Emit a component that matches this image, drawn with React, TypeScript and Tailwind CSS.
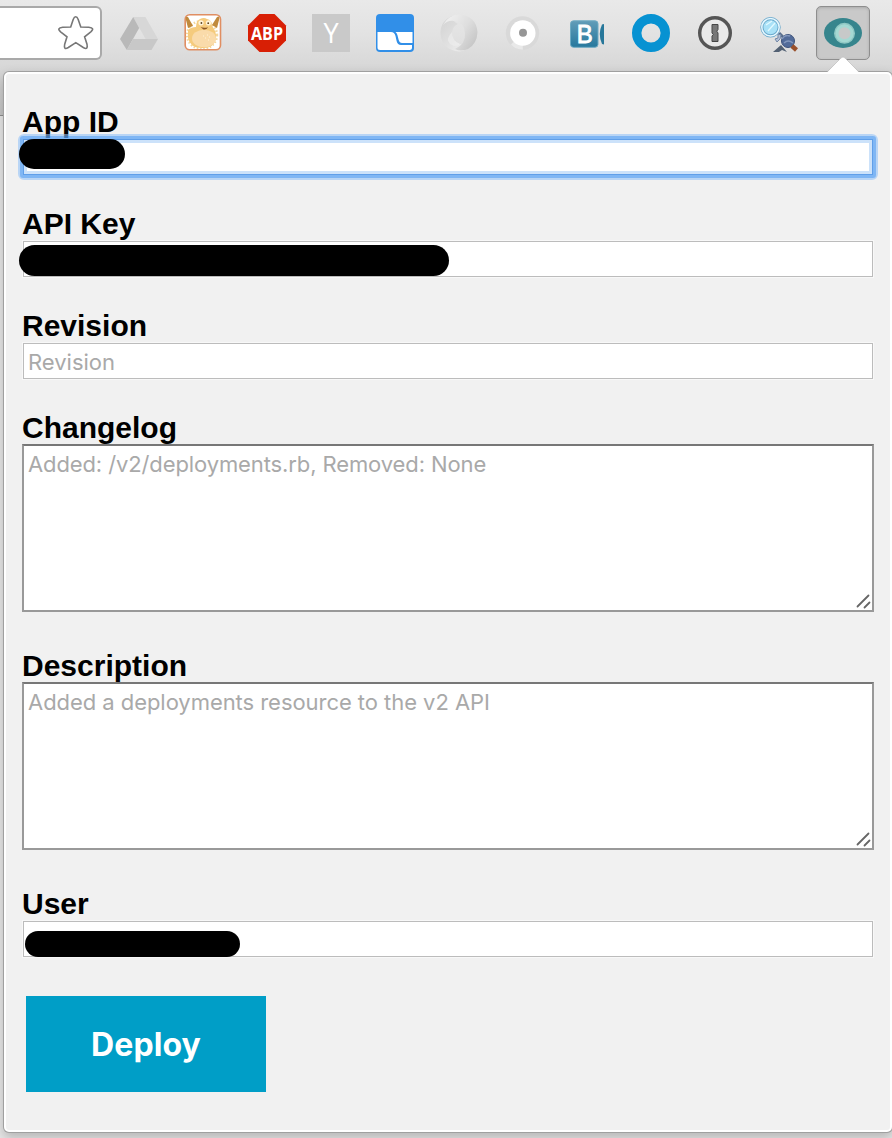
import type { ReactNode } from "react";

function Icon({ children }: { children: ReactNode }) {
  return (
    <svg viewBox="0 0 38 38" className="h-[38px] w-[38px] shrink-0 overflow-visible">
      {children}
    </svg>
  );
}

function Toolbar() {
  return (
    <div className="flex h-[116px] items-start border-b border-[#8f8f8f] bg-[linear-gradient(#e9e9e9_0px,#e2e2e2_35px,#d6d6d6_72px,#c6c6c6_115px)] pt-[6px]">
      <div className="flex h-[54px] w-[102px] shrink-0 items-center justify-end rounded-r-[6px] border-2 border-l-0 border-[#a9a9a9] bg-white pr-[5px]">
        <svg viewBox="0 0 38 38" className="h-[38px] w-[38px]">
          <path
            d="M18.7 2.8Q20.2 2.8 21.2 5.5L23.8 13L31.8 13.3Q38.3 14 33.8 17.8L27.6 22.8L30 30.2Q31.3 36.5 26.3 33.5L18.8 28.6L11.3 33.5Q6.3 36.5 7.7 30.2L10 22.8L3.6 17.8Q-.8 14 5.7 13.3L13.7 13L16.2 5.5Q17.2 2.8 18.7 2.8Z"
            fill="none"
            stroke="#777"
            strokeWidth="1.6"
          />
        </svg>
      </div>
      <div className="ml-[18px] flex gap-[26px] pt-2">
        <Icon>
          <path d="M13.2 3H25.4L38 25H25.6Z" fill="#d7d7d7" />
          <path d="M13.2 3L19.2 14L6.8 36L0 25Z" fill="#b9b9b9" />
          <path d="M13 25H38L31.5 36H6.8Z" fill="#c8c8c8" />
        </Icon>
        <Icon>
          <defs>
            <clipPath id="fishClip"><rect x="1.5" y="1.5" width="34.5" height="33.5" rx="4" /></clipPath>
          </defs>
          <rect x="1.2" y=".8" width="35.3" height="35" rx="4.5" fill="#fff" stroke="#e08e62" strokeWidth="1.6" />
          <g clipPath="url(#fishClip)">
            <ellipse cx="18" cy="21" rx="15" ry="14" fill="none" stroke="#f3d79e" strokeWidth="2.5" strokeDasharray="1.5 1.8" />
            <path d="M1 2L4 3L9 12L4 14ZM36 2L33 3L28 11L33 14Z" fill="#c08a3c" />
            <path d="M4 16Q7 13 12 13Q12 7 16 5Q20 3 23 5Q28 6 28 12Q33 18 32 25Q29 35 18 34Q6 34 4 24Z" fill="#f5cb7d" />
            <ellipse cx="20" cy="24.5" rx="12" ry="8.8" fill="#fadbaa" />
            <circle cx="17" cy="8.8" r="2.6" fill="#fff4d8" />
            <circle cx="24.5" cy="8.8" r="2.6" fill="#fff4d8" />
            <circle cx="17.4" cy="9" r=".9" fill="#5d4420" />
            <circle cx="24.2" cy="9.2" r=".9" fill="#5d4420" />
            <path d="M16.5 13Q20 14.5 24 13.2Q22.5 16 19.5 15.5Z" fill="#8a5524" />
            <path d="M23 21h1M25 23h1M21 24h1M24 26h1M19 22h1" stroke="#fff4d8" strokeWidth="1.2" />
          </g>
        </Icon>
        <Icon>
          <path d="M11.5 0H26.5L38 11.5V26.5L26.5 38H11.5L0 26.5V11.5Z" fill="#d81f05" />
          <text x="19" y="26" textAnchor="middle" textLength="32" lengthAdjust="spacingAndGlyphs" fontFamily="Open Sans" fontWeight="700" fontSize="17.5" fill="#fff">ABP</text>
        </Icon>
        <Icon>
          <rect width="38" height="38" fill="#c9c9c9" />
          <text x="19" y="29" textAnchor="middle" fontFamily="Open Sans" fontSize="27" fill="#fff">Y</text>
        </Icon>
        <Icon>
          <rect width="38" height="38" rx="4" fill="#318fe8" />
          <path d="M1.5 18H15Q18.5 18 19.5 22L20.6 27Q21.5 31 25 31H36V33.5Q36 36 33.5 36H4Q1.5 36 1.5 33.5Z" fill="#fff" />
          <path d="M19.5 18H36.5V29H26Q23.5 29 22.7 26L21.4 21Q20.8 19 19.5 18Z" fill="#fff" />
        </Icon>
        <Icon>
          <defs>
            <linearGradient id="swirlLeft" x1="0" x2="1" y1="0" y2="1">
              <stop stopColor="#d2d2d2" /><stop offset=".5" stopColor="#e0e0e0" /><stop offset="1" stopColor="#f4f4f4" />
            </linearGradient>
            <linearGradient id="swirlRight" x1="0" x2="1" y1="0" y2=".7">
              <stop stopColor="#f3f3f3" /><stop offset=".6" stopColor="#dedede" /><stop offset="1" stopColor="#c6c6c6" />
            </linearGradient>
          </defs>
          <path d="M12 2Q0 7 .5 20Q2 36 19 37.5Q29 37 33 28Q27 33 20 30Q12 27 12 18Q13 12 18 10Q13 8 12 2Z" fill="url(#swirlLeft)" />
          <path d="M3 11Q9 0 20 .5Q36 2 37.5 18Q37 30 28 35Q21 38 15 35Q26 30 25 19Q24 8 14 7Q8 6 3 11Z" fill="url(#swirlRight)" />
          <path d="M12 18Q12 27 20 30Q16 34 10 30Q5 25 12 18Z" fill="#eee" opacity=".6" />
        </Icon>
        <Icon>
          <circle cx="18.5" cy="19" r="16.7" fill="#d9d9d9" />
          <path d="M18.5 19L7 30.5Q11 35.5 18.8 35.7Z" fill="#e9e9e9" />
          <circle cx="18.8" cy="19" r="12.7" fill="#fff" />
          <circle cx="19" cy="18.8" r="4" fill="#969696" />
        </Icon>
        <Icon>
          <defs>
            <linearGradient id="camera" x1="0" x2="0" y1="0" y2="1">
              <stop stopColor="#629db8" /><stop offset="1" stopColor="#26789d" />
            </linearGradient>
          </defs>
          <rect x="2.5" y="6.8" width="27.5" height="26.5" rx="3" fill="url(#camera)" stroke="#6eabc3" />
          <text x="16.8" y="29" textAnchor="middle" textLength="16" lengthAdjust="spacingAndGlyphs" fontFamily="Liberation Sans" fontSize="25.5" fill="#fff" stroke="#fff" strokeWidth=".9">B</text>
          <path d="M36 10V30.5L34 30Q29.5 20 34 10.5Z" fill="#27779a" />
        </Icon>
        <Icon>
          <circle cx="19" cy="19" r="14.3" fill="none" stroke="#0792d2" strokeWidth="9.4" />
        </Icon>
        <Icon>
          <circle cx="19" cy="19" r="15.3" fill="#e9e9e9" stroke="#555" strokeWidth="3.4" />
          <path d="M16 10.5H22V15.5L20.8 17.2L22 19V27.5H16V22L17.3 20.5L16 19Z" fill="#777" stroke="#464646" />
        </Icon>
        <Icon>
          <path d="M19 19L27 27" stroke="#576c8b" strokeWidth="3" />
          <circle cx="10.5" cy="13.3" r="8.6" fill="#a9e1f7" stroke="#6aa8cb" strokeWidth="3.2" />
          <circle cx="10.5" cy="13.3" r="8.7" fill="none" stroke="#e7f8ff" strokeWidth="1.5" />
          <path d="M6 11L12 7M8 17L15 9" stroke="#e2f9ff" strokeWidth="1.3" />
          <path d="M18 20L21 21L20 25L17 28L15 25L18 24Z" fill="#b5c2d7" stroke="#7388a8" />
          <path d="M13 38L21 31L27 38L22 36L19 38Z" fill="#536173" />
          <circle cx="28" cy="27" r="6.5" fill="#526b99" stroke="#3d527a" strokeWidth="1" />
          <path d="M22 25Q25 20 30 22M24 29Q28 25 33 29" fill="none" stroke="#8297bd" strokeWidth="1.4" />
          <path d="M32 32L36.5 36" stroke="#99502b" strokeWidth="4.5" />
        </Icon>
      </div>
      <div className="ml-[18px] flex h-[54px] w-[54px] shrink-0 items-center justify-center rounded-[5px] border border-[#8e8e8e] bg-[#c9c9c9] shadow-[inset_0_1px_3px_#aaa]">
        <Icon>
          <ellipse cx="19" cy="19" rx="19" ry="15" fill="#36858d" />
          <circle cx="20.5" cy="19.3" r="10.5" fill="#8fc8c4" />
          <circle cx="20.5" cy="19.3" r="7.5" fill="#c7c9c9" stroke="#a4d9d3" strokeWidth="3" />
        </Icon>
      </div>
    </div>
  );
}

function Label({ children }: { children: ReactNode }) {
  return <div className="h-[34px] text-[30px] leading-[36px] font-bold whitespace-nowrap text-black">{children}</div>;
}

function InputField({ label, focused, placeholder, children }: { label: string; focused?: boolean; placeholder?: string; children?: ReactNode }) {
  return (
    <div className="h-[102px]">
      <Label>{label}</Label>
      <div
        className={
          focused
            ? "relative m-px flex h-9 items-center border border-[#609fe9] bg-white shadow-[inset_0_0_0_3px_#cce2fa]"
            : "relative m-px flex h-9 items-center border border-[#bcbcbc] bg-white shadow-[0_0_0_1px_#f8f8f8]"
        }
      >
        {focused && (
          <div className="absolute -inset-[6px] rounded-[6px] border-2 border-[#94c3f8]/60">
            <div className="absolute inset-0 rounded-[3px] border-[3px] border-[#58a1f4]/75" />
          </div>
        )}
        {placeholder && <span className="pt-[2px] pl-1 font-[Inter] text-[22px] leading-[30px] text-[#a9a9a9]">{placeholder}</span>}
        {children}
      </div>
    </div>
  );
}

function TextAreaField({ label, placeholder, spacing }: { label: string; placeholder: string; spacing: string }) {
  return (
    <div className="h-[238px]">
      <Label>{label}</Label>
      <div className="flex h-[168px] items-start justify-between border-2 border-[#999] border-t-[#777] bg-white pl-1">
        <span className={`pt-[3px] font-[Inter] text-[22px] leading-[30px] whitespace-nowrap text-[#a9a9a9] ${spacing}`}>{placeholder}</span>
        <svg viewBox="0 0 18 18" className="h-[18px] w-[18px] shrink-0 self-end">
          <path d="M3.5 14.5L14.5 3.5M10.5 15.5L15.5 10.5" stroke="#666" strokeWidth="1.8" strokeLinecap="round" />
        </svg>
      </div>
    </div>
  );
}

export default function App() {
  return (
    <div className="relative h-[1138px] w-[892px] overflow-hidden bg-[#e8e8e8] font-['Liberation_Sans',sans-serif]">
      <Toolbar />
      <div className="relative -mt-[44px] ml-1 h-[1060px] w-[888px] rounded-[5px] border-2 border-white bg-[#f1f1f1] px-4 pt-[30px] shadow-[0_0_0_1px_#a0a0a0,0_5px_12px_1px_rgba(0,0,0,0.22)]">
        <svg viewBox="0 0 34 18" className="absolute -top-[18px] left-[820px] h-[18px] w-[34px]">
          <path d="M1 16.5L15 2Q17 0 19 2L33 16.5V18H1Z" fill="#fff" />
          <path d="M1 16L15 2Q17 0 19 2L33 16" fill="none" stroke="#b8b8b8" strokeWidth=".6" />
        </svg>
        <InputField label="App ID" focused>
          <div className="absolute -top-px -left-[5px] h-[30px] w-[106px] rounded-[15px] bg-black" />
        </InputField>
        <InputField label="API Key">
          <div className="absolute top-[3px] -left-[5px] h-[31px] w-[430px] rounded-[15.5px] bg-black" />
        </InputField>
        <InputField label="Revision" placeholder="Revision" />
        <TextAreaField label="Changelog" placeholder="Added: /v2/deployments.rb, Removed: None" spacing="tracking-[-0.11px]" />
        <TextAreaField label="Description" placeholder="Added a deployments resource to the v2 API" spacing="tracking-[-0.05px]" />
        <InputField label="User">
          <div className="absolute top-[9px] left-px h-[26px] w-[215px] rounded-[13px] bg-black" />
        </InputField>
        <button className="mt-[8px] ml-1 flex h-24 w-60 items-center justify-center bg-[#009ec7] pt-[2px] font-[Inter] text-[32px] font-bold tracking-[0.1px] text-white">
          Deploy
        </button>
      </div>
    </div>
  );
}
